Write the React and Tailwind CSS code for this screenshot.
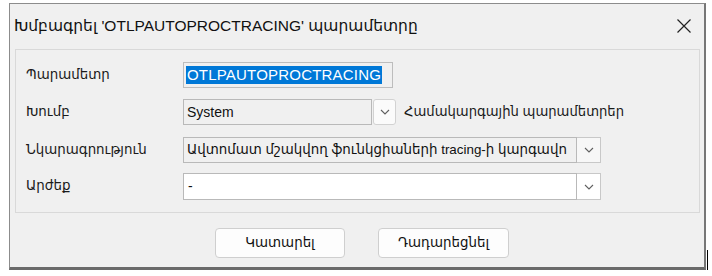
import React from 'react';

const font = { fontFamily: '"Liberation Sans", "DejaVu Sans", sans-serif' };

function Chevron() {
  return (
    <svg width="10" height="6" viewBox="0 0 10 6" className="block">
      <polyline points="1,1 5,5 9,1" fill="none" stroke="#606060" strokeWidth="1.1" />
    </svg>
  );
}

function Label({ children }) {
  return <div className="w-[157px] shrink-0 text-[13.4px] text-[#1a1a1a]">{children}</div>;
}

export default function App() {
  return (
    <div className="w-[712px] h-[276px] bg-white overflow-hidden" style={font}>
      <div className="flex pt-[3px] pl-[9px]">
        <div className="w-[697px] h-[267px] bg-[#f0f0f0] border-t border-l border-[#8c8c8c] border-r-2 border-r-[#777] border-b-[3px] border-b-[#6a6a6a] flex flex-col">
          {/* title bar */}
          <div className="h-[45px] flex items-center justify-between pl-[4px] pr-[12px] pb-[2px]">
            <span className="text-[15.5px] text-[#111]">Խմբագրել 'OTLPAUTOPROCTRACING' պարամետրը</span>
            <svg width="16" height="16" viewBox="0 0 16 16">
              <path d="M1.5 1.5 L14.5 14.5 M14.5 1.5 L1.5 14.5" stroke="#222" strokeWidth="1.2" />
            </svg>
          </div>

          {/* group box */}
          <div className="ml-[5px] w-[685px] h-[164px] border border-[#d9d9d9] pl-[10px] pt-[12px]">
            <div className="flex items-center h-[26px]">
              <Label>Պարամետր</Label>
              <div className="w-[210px] h-[26px] border border-[#bdbdbd] bg-[#f0f0f0] flex items-center pl-[2px]">
                <span className="bg-[#0078d7] text-white text-[15px] leading-[18px] px-[1px] tracking-[0.2px]">OTLPAUTOPROCTRACING</span>
              </div>
            </div>

            <div className="flex items-center h-[26px] mt-[11px]">
              <Label>Խումբ</Label>
              <div className="w-[189px] h-[26px] border border-[#b9b9b9] bg-[#f0f0f0] flex items-center pl-[3px] text-[14px] text-[#111]">System</div>
              <div className="ml-[1px] w-[23px] h-[26px] border border-[#d2d2d2] rounded-[3px] bg-[#fbfbfb] flex items-center justify-center">
                <Chevron />
              </div>
              <span className="ml-[8px] text-[13.2px] text-[#1a1a1a]">Համակարգային պարամետրեր</span>
            </div>

            <div className="flex items-center h-[26px] mt-[12px]">
              <Label>Նկարագրություն</Label>
              <div className="w-[394px] h-[26px] border border-[#b9b9b9] bg-[#f0f0f0] flex items-center pl-[3px] text-[13.4px] text-[#111] overflow-hidden whitespace-nowrap">
                Ավտոմատ մշակվող ֆունկցիաների tracing-ի կարգավո
              </div>
              <div className="w-[24px] h-[26px] border border-[#c8c8c8] border-l-0 bg-[#f7f7f7] flex items-center justify-center">
                <Chevron />
              </div>
            </div>

            <div className="flex items-center h-[27px] mt-[10px]">
              <Label>Արժեք</Label>
              <div className="w-[394px] h-[27px] border border-[#b9b9b9] bg-white flex items-center pl-[4px] text-[14px] text-[#111]">-</div>
              <div className="w-[24px] h-[27px] border border-[#c8c8c8] border-l-0 bg-white flex items-center justify-center">
                <Chevron />
              </div>
            </div>
          </div>

          {/* buttons */}
          <div className="flex pl-[205px] mt-[15px] gap-[33px]">
            <button className="w-[130px] h-[30px] rounded-[4px] border border-[#cfcfcf] bg-[#fdfdfd] text-[13.4px] text-[#111]">Կատարել</button>
            <button className="w-[131px] h-[30px] rounded-[4px] border border-[#cfcfcf] bg-[#fdfdfd] text-[13.4px] text-[#111]">Դադարեցնել</button>
          </div>
        </div>
        <div className="mt-[247px] ml-[1px] w-[1px] h-[20px] bg-black" />
      </div>
    </div>
  );
}
